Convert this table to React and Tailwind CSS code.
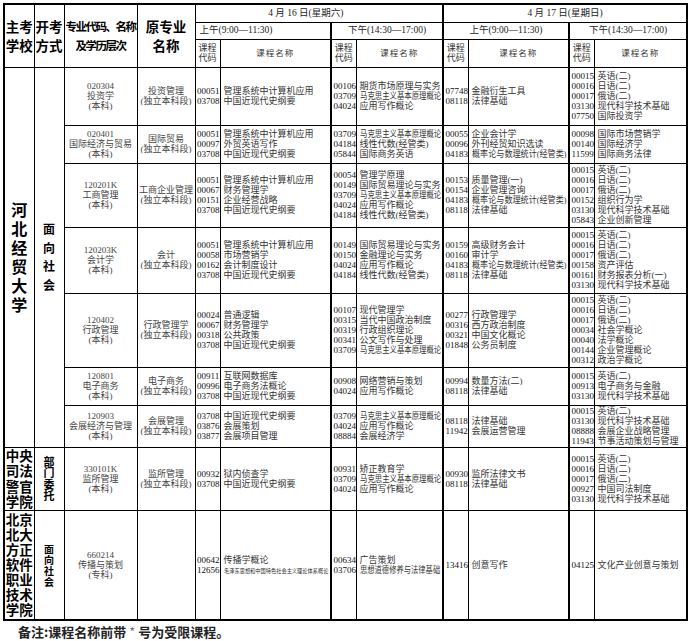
import React from 'react';

const SQ = {
  '马克思主义基本原理概论': '[transform:scaleX(0.82)]',
  '概率论与数理统计(经管类)': '[transform:scaleX(0.9)]',
  '思想道德修养与法律基础': '[transform:scaleX(0.81)]',
  '毛泽东思想和中国特色社会主义理论体系概论': 'text-[6px] [transform:scaleX(0.87)]',
};

const rows = [
  {
    h: 'h-[58px]',
    major: ['020304', '投资学', '(本科)'],
    orig: ['投资管理', '(独立本科段)'],
    a16: [['00051', '管理系统中计算机应用'], ['03708', '中国近现代史纲要']],
    p16: [['00106', '期货市场原理与实务'], ['03709', '马克思主义基本原理概论'], ['04024', '应用写作概论']],
    a17: [['07748', '金融衍生工具'], ['08118', '法律基础']],
    p17: [['00015', '英语(二)'], ['00016', '日语(二)'], ['00017', '俄语(二)'], ['03130', '现代科学技术基础'], ['07750', '国际投资学']],
  },
  {
    h: 'h-[38px]',
    major: ['020401', '国际经济与贸易', '(本科)'],
    orig: ['国际贸易', '(独立本科段)'],
    a16: [['00051', '管理系统中计算机应用'], ['00097', '外贸英语写作'], ['03708', '中国近现代史纲要']],
    p16: [['03709', '马克思主义基本原理概论'], ['04184', '线性代数(经管类)'], ['05844', '国际商务英语']],
    a17: [['00055', '企业会计学'], ['00096', '外刊经贸知识选读'], ['04183', '概率论与数理统计(经管类)']],
    p17: [['00098', '国际市场营销学'], ['00140', '国际经济学'], ['11599', '国际商务法律']],
  },
  {
    h: 'h-[64px]',
    major: ['120201K', '工商管理', '(本科)'],
    orig: ['工商企业管理', '(独立本科段)'],
    a16: [['00051', '管理系统中计算机应用'], ['00067', '财务管理学'], ['00151', '企业经营战略'], ['03708', '中国近现代史纲要']],
    p16: [['00054', '管理学原理'], ['00149', '国际贸易理论与实务'], ['03709', '马克思主义基本原理概论'], ['04024', '应用写作概论'], ['04184', '线性代数(经管类)']],
    a17: [['00153', '质量管理(一)'], ['00154', '企业管理咨询'], ['04183', '概率论与数理统计(经管类)'], ['08118', '法律基础']],
    p17: [['00015', '英语(二)'], ['00016', '日语(二)'], ['00017', '俄语(二)'], ['00152', '组织行为学'], ['03130', '现代科学技术基础'], ['05843', '企业创新管理']],
  },
  {
    h: 'h-[66px]',
    major: ['120203K', '会计学', '(本科)'],
    orig: ['会计', '(独立本科段)'],
    a16: [['00051', '管理系统中计算机应用'], ['00058', '市场营销学'], ['00162', '会计制度设计'], ['03708', '中国近现代史纲要']],
    p16: [['00149', '国际贸易理论与实务'], ['00150', '金融理论与实务'], ['04024', '应用写作概论'], ['04184', '线性代数(经管类)']],
    a17: [['00159', '高级财务会计'], ['00160', '审计学'], ['04183', '概率论与数理统计(经管类)'], ['08118', '法律基础']],
    p17: [['00015', '英语(二)'], ['00016', '日语(二)'], ['00017', '俄语(二)'], ['00158', '资产评估'], ['00161', '财务报表分析(一)'], ['03130', '现代科学技术基础']],
  },
  {
    h: 'h-[74px]',
    major: ['120402', '行政管理', '(本科)'],
    orig: ['行政管理学', '(独立本科段)'],
    a16: [['00024', '普通逻辑'], ['00067', '财务管理学'], ['00318', '公共政策'], ['03708', '中国近现代史纲要']],
    p16: [['00107', '现代管理学'], ['00315', '当代中国政治制度'], ['00319', '行政组织理论'], ['00341', '公文写作与处理'], ['03709', '马克思主义基本原理概论']],
    a17: [['00277', '行政管理学'], ['00316', '西方政治制度'], ['00321', '中国文化概论'], ['01848', '公务员制度']],
    p17: [['00015', '英语(二)'], ['00016', '日语(二)'], ['00017', '俄语(二)'], ['00034', '社会学概论'], ['00040', '法学概论'], ['00144', '企业管理概论'], ['00312', '政治学概论']],
  },
  {
    h: 'h-[38px]',
    major: ['120801', '电子商务', '(本科)'],
    orig: ['电子商务', '(独立本科段)'],
    a16: [['00911', '互联网数据库'], ['00996', '电子商务法概论'], ['03708', '中国近现代史纲要']],
    p16: [['00908', '网络营销与策划'], ['04024', '应用写作概论']],
    a17: [['00994', '数量方法(二)'], ['08118', '法律基础']],
    p17: [['00015', '英语(二)'], ['00913', '电子商务与金融'], ['03130', '现代科学技术基础']],
  },
  {
    h: 'h-[42px]',
    major: ['120903', '会展经济与管理', '(本科)'],
    orig: ['会展管理', '(独立本科段)'],
    a16: [['03708', '中国近现代史纲要'], ['03876', '会展策划'], ['03877', '会展项目管理']],
    p16: [['03709', '马克思主义基本原理概论'], ['04024', '应用写作概论'], ['08884', '会展经济学']],
    a17: [['08118', '法律基础'], ['11942', '会展运营管理']],
    p17: [['00015', '英语(二)'], ['03130', '现代科学技术基础'], ['08888', '会展企业战略管理'], ['11943', '节事活动策划与管理']],
  },
  {
    h: 'h-[63px]',
    major: ['330101K', '监所管理', '(本科)'],
    orig: ['监所管理', '(独立本科段)'],
    a16: [['00932', '狱内侦查学'], ['03708', '中国近现代史纲要']],
    p16: [['00931', '矫正教育学'], ['03709', '马克思主义基本原理概论'], ['04024', '应用写作概论']],
    a17: [['00930', '监所法律文书'], ['08118', '法律基础']],
    p17: [['00015', '英语(二)'], ['00016', '日语(二)'], ['00017', '俄语(二)'], ['00927', '中国司法制度'], ['03130', '现代科学技术基础']],
  },
  {
    h: 'h-[110px]',
    major: ['660214', '传播与策划', '(专科)'],
    orig: [],
    a16: [['00642', '传播学概论'], ['12656', '毛泽东思想和中国特色社会主义理论体系概论']],
    p16: [['00634', '广告策划'], ['03706', '思想道德修养与法律基础']],
    a17: [['13416', '创意写作']],
    p17: [['04125', '文化产业创意与策划']],
  },
];

const td = 'border border-black p-0 align-middle';
const hd = "font-['Noto_Sans_CJK_SC',sans-serif] font-bold text-black";

function Lines({ items, className = '' }) {
  return (
    <div className={className}>
      {items.map((t, i) => (
        <div key={i} className="h-[10px] leading-[10px] whitespace-nowrap">
          {t}
        </div>
      ))}
    </div>
  );
}

function Session({ items, last }) {
  return (
    <>
      <td className={`${td} pl-[1.5px] text-[9px] text-[#111]`}>
        <Lines items={items.map((x) => x[0])} />
      </td>
      <td className={`${td} pl-[3px] text-[9px] text-[#333] ${last ? '' : 'border-r-2'}`}>
        <div>
          {items.map((x, i) => (
            <div key={i} className="h-[10px] leading-[10px] whitespace-nowrap">
              <span className={`inline-block origin-left ${SQ[x[1]] || ''}`}>{x[1]}</span>
            </div>
          ))}
        </div>
      </td>
    </>
  );
}

function Stack({ chars, className = '' }) {
  return (
    <div className={`flex flex-col items-center ${className}`}>
      {chars.map((c, i) => (
        <div key={i}>{c}</div>
      ))}
    </div>
  );
}

export default function App() {
  return (
    <div className="bg-white w-[690px] h-[641px] overflow-hidden pl-[3px] pt-[3px] font-['Liberation_Serif','Noto_Sans_CJK_SC',serif]">
      <table className="table-fixed border-collapse border-2 border-black w-[683px]">
        <colgroup>
          <col className="w-[30px]" />
          <col className="w-[30px]" />
          <col className="w-[73px]" />
          <col className="w-[58px]" />
          <col className="w-[25px]" />
          <col className="w-[111px]" />
          <col className="w-[25px]" />
          <col className="w-[87px]" />
          <col className="w-[25px]" />
          <col className="w-[101px]" />
          <col className="w-[25px]" />
          <col className="w-[93px]" />
        </colgroup>
        <thead>
          <tr className="h-[18px]">
            <th rowSpan={3} className={`${td} ${hd} text-[13.5px] leading-[19px]`}>
              <div>主考</div>
              <div>学校</div>
            </th>
            <th rowSpan={3} className={`${td} ${hd} text-[13.5px] leading-[19px]`}>
              <div>开考</div>
              <div>方式</div>
            </th>
            <th rowSpan={3} className={`${td} ${hd} text-[11.5px] leading-[19px] tracking-[-1.5px] whitespace-nowrap`}>
              <div>专业代码、名称</div>
              <div>及学历层次</div>
            </th>
            <th rowSpan={3} className={`${td} ${hd} text-[13.5px] leading-[19px]`}>
              <div>原专业</div>
              <div>名称</div>
            </th>
            <th colSpan={4} className={`${td} border-r-2 font-normal text-[9.5px] text-[#222] pr-[26px]`}>
              4 月 16 日(星期六)
            </th>
            <th colSpan={4} className={`${td} font-normal text-[9.5px] text-[#222]`}>
              4 月 17 日(星期日)
            </th>
          </tr>
          <tr className="h-[17px]">
            <th colSpan={2} className={`${td} border-r-2 font-normal text-[9.5px] text-[#222] text-left pl-[4px]`}>
              上午(9:00—11:30)
            </th>
            <th colSpan={2} className={`${td} border-r-2 font-normal text-[9.5px] text-[#222]`}>
              下午(14:30—17:00)
            </th>
            <th colSpan={2} className={`${td} border-r-2 font-normal text-[9.5px] text-[#222]`}>
              上午(9:00—11:30)
            </th>
            <th colSpan={2} className={`${td} font-normal text-[9.5px] text-[#222]`}>
              下午(14:30—17:00)
            </th>
          </tr>
          <tr className="h-[28px]">
            {[0, 1, 2, 3].map((i) => (
              <React.Fragment key={i}>
                <th className={`${td} font-normal text-[9px] leading-[10px] text-[#333]`}>
                  <div>课程</div>
                  <div>代码</div>
                </th>
                <th className={`${td} font-normal text-[8.5px] tracking-[1px] text-[#333] ${i < 3 ? 'border-r-2' : ''}`}>
                  课程名称
                </th>
              </React.Fragment>
            ))}
          </tr>
        </thead>
        <tbody>
          {rows.map((r, i) => (
            <tr key={i} className={r.h}>
              {i === 0 && (
                <>
                  <td rowSpan={7} className={`${td} ${hd} text-[16px] leading-[19px]`}>
                    <Stack chars={['河', '北', '经', '贸', '大', '学']} />
                  </td>
                  <td rowSpan={7} className={`${td} ${hd} text-[12px] leading-[18.5px]`}>
                    <Stack chars={['面', '向', '社', '会']} />
                  </td>
                </>
              )}
              {i === 7 && (
                <>
                  <td className={`${td} ${hd} text-[13.5px] leading-[15.5px]`}>
                    <Stack chars={['中央', '司法', '警官', '学院']} />
                  </td>
                  <td className={`${td} ${hd} text-[11px] leading-[11.5px]`}>
                    <Stack chars={['部', '门', '委', '托']} />
                  </td>
                </>
              )}
              {i === 8 && (
                <>
                  <td className={`${td} ${hd} text-[13.5px] leading-[15px]`}>
                    <Stack chars={['北京', '北大', '方正', '软件', '职业', '技术', '学院']} />
                  </td>
                  <td className={`${td} ${hd} text-[10px] leading-[11px]`}>
                    <Stack chars={['面', '向', '社', '会']} />
                  </td>
                </>
              )}
              <td className={`${td} text-center text-[9px] text-[#444]`}>
                <Lines items={r.major} />
              </td>
              <td className={`${td} text-center text-[9px] text-[#444]`}>
                <Lines items={r.orig} />
              </td>
              <Session items={r.a16} />
              <Session items={r.p16} />
              <Session items={r.a17} />
              <Session items={r.p17} last />
            </tr>
          ))}
        </tbody>
      </table>
      <div className="mt-[4px] pl-[15px] h-[14px] leading-[14px] text-[13px] font-bold text-[#222] font-['Noto_Sans_CJK_SC',sans-serif] whitespace-nowrap">
        备注:课程名称前带 <span className="font-normal text-[#777]">*</span> 号为受限课程。
      </div>
    </div>
  );
}
